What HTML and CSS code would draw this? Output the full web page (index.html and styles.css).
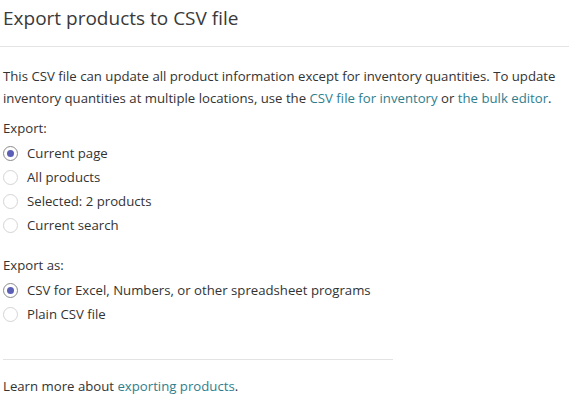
FILE: index.html
```html
<!DOCTYPE html>
<html lang="en">
<head>
    <meta charset="UTF-8">
    <title>Export products</title>
    <link rel="stylesheet" href="styles.css">
</head>
<body>
    <div class="modal">
        <div class="modal-header">
            <h2>Export products to CSV file</h2>
        </div>

        <div class="modal-body">
            <p class="intro">
                This CSV file can update all product information except for inventory quantities. To update
                inventory quantities at multiple locations, use the <a href="#">CSV file for inventory</a> or <a href="#">the bulk editor</a>.
            </p>

            <!-- Что экспортировать -->
            <div class="choice-group">
                <div class="choice-label">Export:</div>
                <label class="choice"><input type="radio" name="export" checked><span class="radio"></span>Current page</label>
                <label class="choice"><input type="radio" name="export"><span class="radio"></span>All products</label>
                <label class="choice"><input type="radio" name="export"><span class="radio"></span>Selected: 2 products</label>
                <label class="choice"><input type="radio" name="export"><span class="radio"></span>Current search</label>
            </div>

            <!-- Формат -->
            <div class="choice-group second">
                <div class="choice-label">Export as:</div>
                <label class="choice"><input type="radio" name="format" checked><span class="radio"></span>CSV for Excel, Numbers, or other spreadsheet programs</label>
                <label class="choice"><input type="radio" name="format"><span class="radio"></span>Plain CSV file</label>
            </div>

            <div class="footer-note">
                Learn more about <a href="#">exporting products</a>.
            </div>
        </div>
    </div>
</body>
</html>
```

FILE: styles.css
```css
* {
    margin: 0;
    padding: 0;
    box-sizing: border-box;
}

body {
    font-family: 'Open Sans', 'Noto Sans', sans-serif;
    font-size: 13.2px;
    color: #333;
    background: #fff;
}

a {
    color: #2f7e8e;
    text-decoration: none;
}

.modal-header {
    height: 47px;
    padding: 4px 3px 0;
    border-bottom: 1px solid #e3e3e3;
}

h2 {
    font-size: 19px;
    font-weight: 400;
    line-height: 28px;
    color: #3a3a3a;
}

.modal-body {
    padding: 18px 3px 0;
}

.intro {
    line-height: 22px;
    width: 564px;
}

.choice-group {
    margin-top: 8px;
}

.choice-group.second {
    margin-top: 17px;
}

.choice-label {
    line-height: 22px;
    margin-bottom: 2px;
}

.choice {
    display: flex;
    align-items: center;
    height: 24px;
    cursor: pointer;
}

.choice input {
    display: none;
}

.radio {
    width: 15px;
    height: 15px;
    border: 1px solid #d4d4d4;
    border-radius: 50%;
    margin-right: 9px;
    display: flex;
    justify-content: center;
    align-items: center;
}

.choice input:checked + .radio {
    border-color: #8a8a8a;
}

.choice input:checked + .radio::after {
    content: '';
    width: 7px;
    height: 7px;
    border-radius: 50%;
    background: #5c5fb6;
}

.footer-note {
    margin-top: 33px;
    width: 390px;
    border-top: 1px solid #e3e3e3;
    padding-top: 15px;
    line-height: 22px;
}
```
